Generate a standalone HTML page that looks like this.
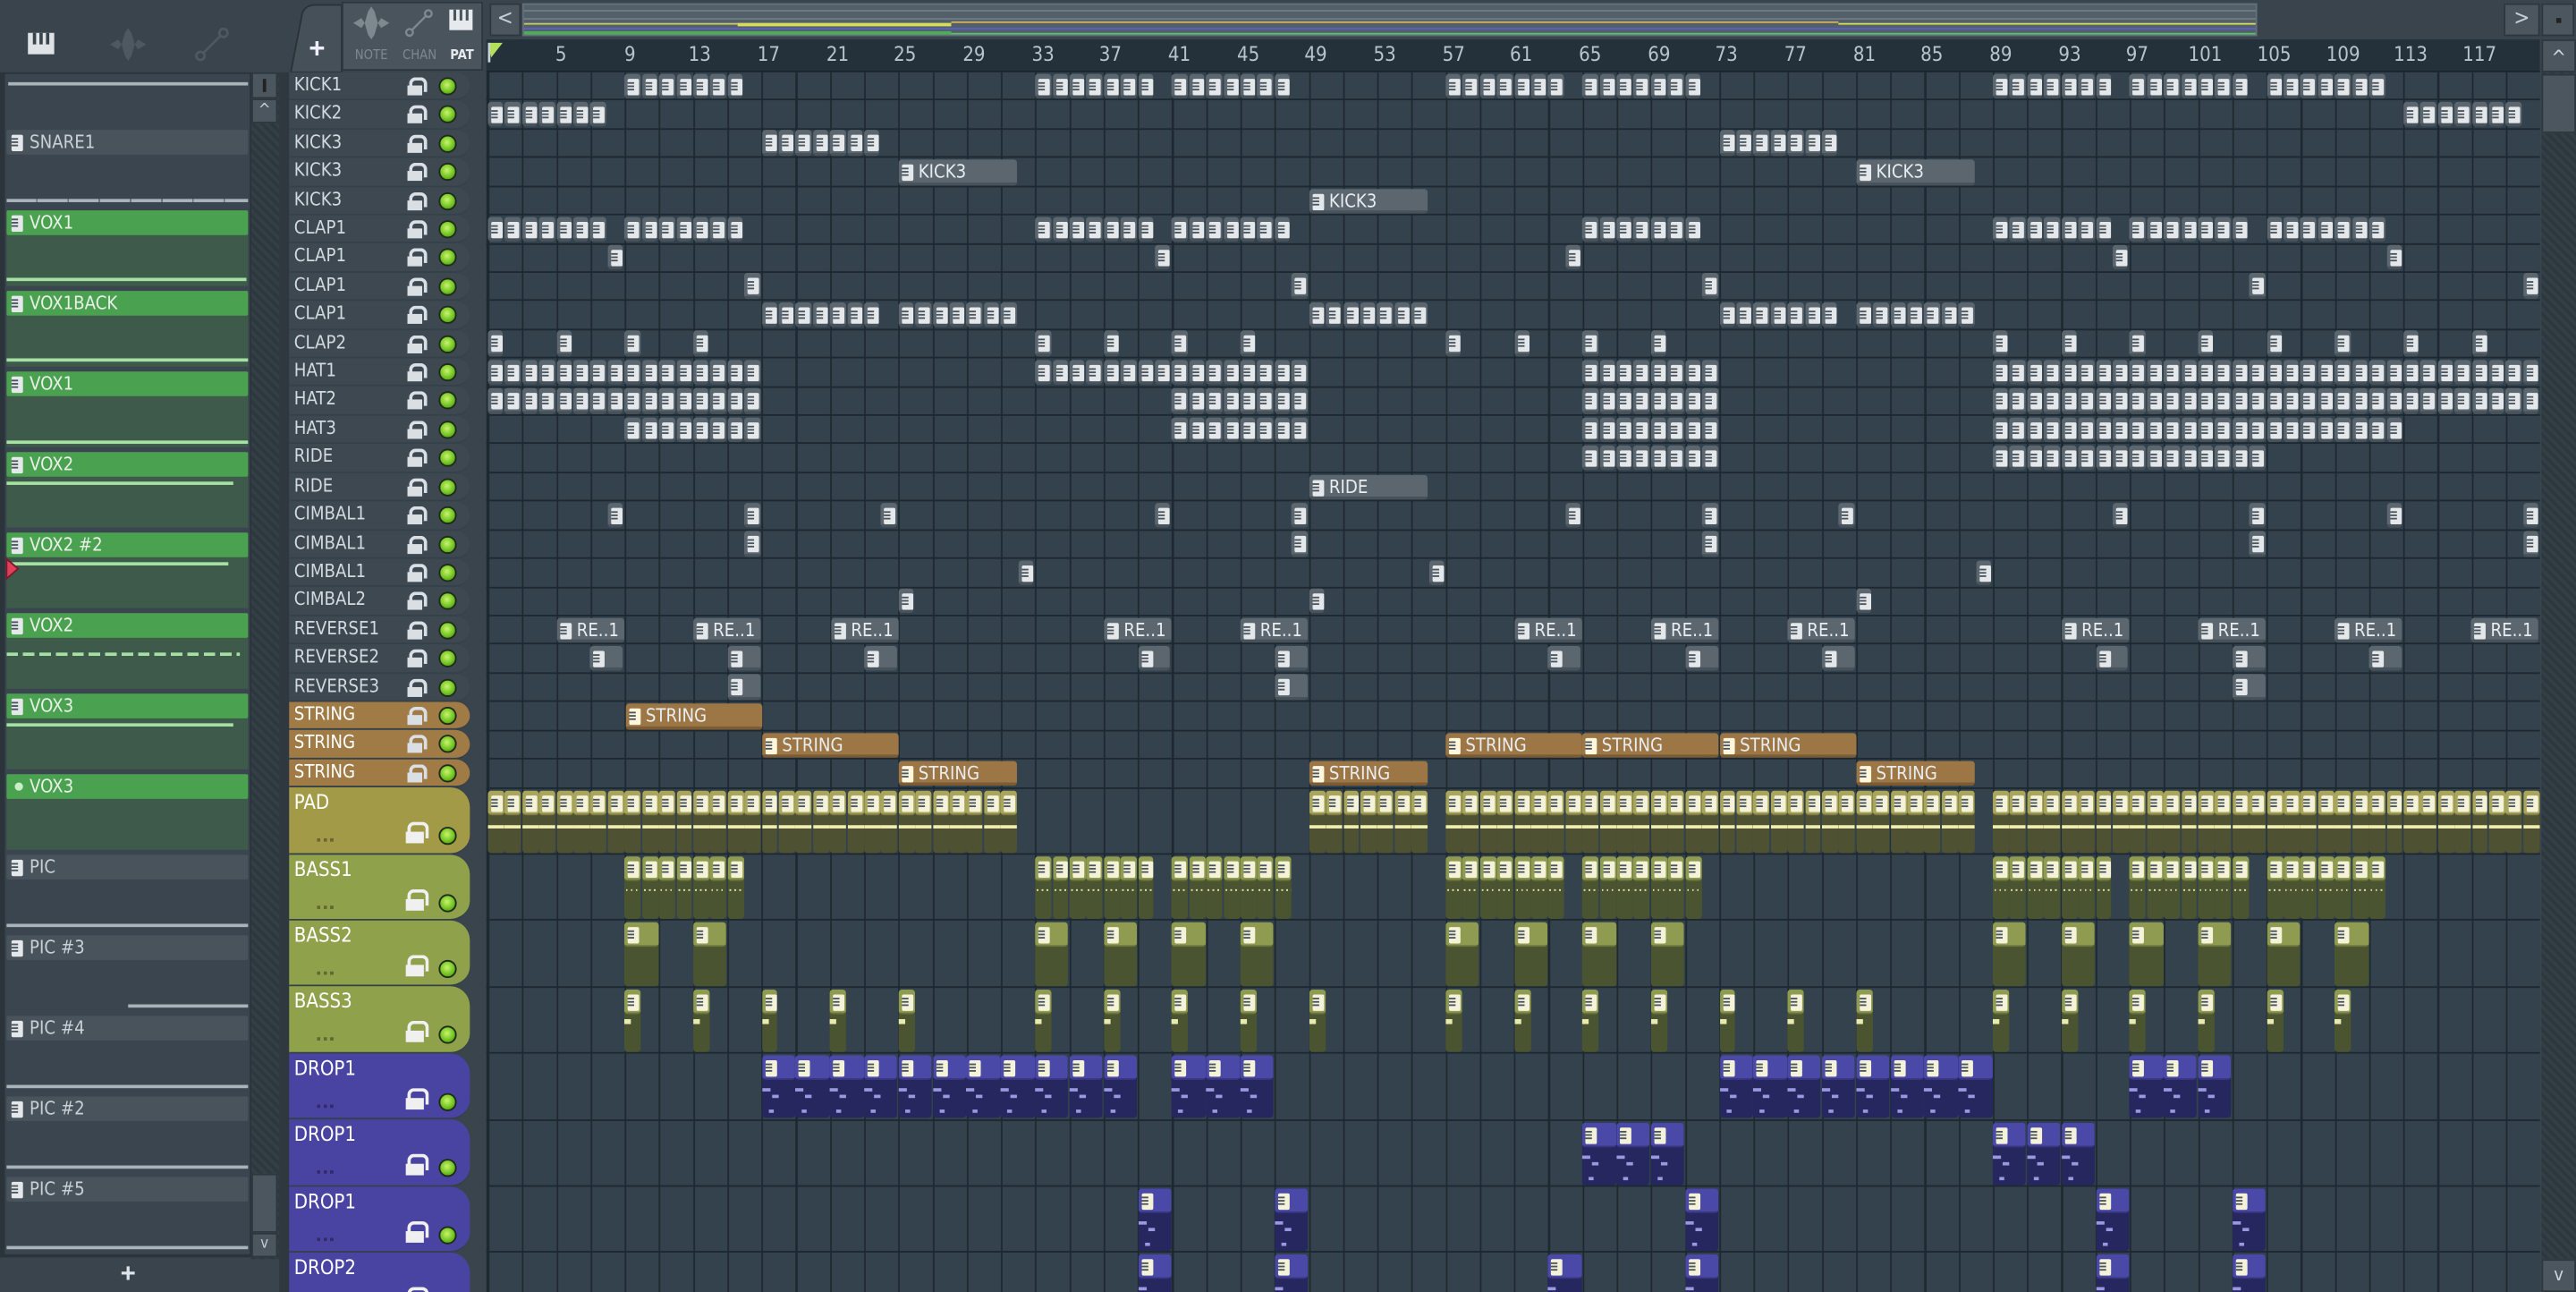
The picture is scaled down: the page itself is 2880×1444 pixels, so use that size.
<!DOCTYPE html>
<html><head><meta charset="utf-8"><style>
*{margin:0;padding:0;box-sizing:border-box}
html,body{width:2880px;height:1444px;overflow:hidden;background:#2c363e}
#w{position:absolute;left:0;top:0;width:1568px;height:786px;transform:scale(1.83673,1.83715);transform-origin:0 0;background:#3a444c;font-family:"DejaVu Sans Condensed","Liberation Sans Narrow","Liberation Sans",sans-serif;overflow:hidden}
.a{position:absolute}
.ic{position:absolute;width:7px;height:10px;background:#e4e8eb;border-radius:1px}
.ic:before{content:"";position:absolute;left:0;top:2px;width:4px;height:1px;background:#4a545d;box-shadow:0 2px 0 #4a545d,0 4px 0 #4a545d}
.lp{position:absolute;left:4px;width:147px}
.lh{position:absolute;left:0;top:0;width:147px;height:15px;border-radius:1px;color:#e8f0e8;font-size:11px;line-height:15px;padding-left:14px}
.lh .ic{left:3px;top:3px}
.g .lh{background:#4aa14f}
.g{background:#3e5a4a}
.k .lh{background:#49535c;color:#c9d1d7}
.k{background:#3a454f}
.ln{position:absolute;left:0;height:2px;background:#a6e0a4}
.k .ln{background:#a8b3ba}
#hd{position:absolute;left:176px;top:44px;width:110px}
.r{position:relative;height:17.42px;background:#3d4851;border-radius:0 9px 9px 0;border-bottom:1px solid #34404a;color:#d3dade;font-size:11px;line-height:16px;padding-left:3px}
.r.t{height:40.4px;border-radius:0 12px 12px 0;color:#fff;font-size:12px;line-height:18px}
.lk{position:absolute;left:72px;top:3px;width:9px;height:11px}
.lk:before{content:"";position:absolute;left:1px;top:0;width:7px;height:7px;border:2px solid #d9dfe3;border-bottom:none;border-radius:4px 4px 0 0}
.lk:after{content:"";position:absolute;left:0;top:5px;width:9px;height:6px;background:#d9dfe3}
.dt{position:absolute;left:91px;top:3px;width:11px;height:11px;border-radius:50%;background:radial-gradient(circle at 45% 40%,#c8f56a,#6cc020 60%,#3d7a12);border:1.5px solid #1f2a18}
.t .lk{top:21px;left:71px;width:11px;height:13px}
.t .lk:after{top:6px;height:7px;width:11px;background:#f0f0f0}
.t .lk:before{width:9px;height:8px;border-color:#f0f0f0}
.t .dt{top:24px}
.t .dots{position:absolute;left:17px;top:31px;width:10px;height:2px;background:repeating-linear-gradient(90deg,rgba(0,0,0,.35) 0 2px,transparent 2px 4px)}
#gr{position:absolute;left:296px;top:44px;width:1250px;height:742px;background:#33424d repeating-linear-gradient(90deg,#1d2830 0 1px,transparent 1px 20.82px);background-position:1px 0}
.gl{position:absolute;left:0;width:1250px;height:1px;background:#1d2830}
.c{position:absolute;border-radius:2px;overflow:hidden}
.c .ic{left:2px;top:3px}
.cl{position:absolute;left:12px;top:0;font-size:11px;line-height:16px;color:#e9edf0;white-space:nowrap}
#rl{position:absolute;left:296px;top:24px;width:1250px;height:20px;background:#25313a;border-bottom:1px solid #1b242b}
#rl span{position:absolute;top:2px;font-size:12px;color:#b9c3cb}
</style></head><body><div id="w">

<div class="a" style="left:0;top:0;width:176px;height:44px;background:#3a444c"></div>
<svg class="a" style="left:16px;top:18px" width="20" height="18" viewBox="0 0 20 18"><rect x="1" y="2" width="16" height="13" fill="#dfe3e6"/><rect x="4" y="2" width="2" height="7" fill="#3a444c"/><rect x="8" y="2" width="2" height="7" fill="#3a444c"/><rect x="12" y="2" width="2" height="7" fill="#3a444c"/></svg>
<svg class="a" style="left:66px;top:16px" width="24" height="22" viewBox="0 0 24 22"><path d="M1 11 L6 8 L8 11 L10 4 L12 1 L14 4 L16 11 L18 8 L23 11 L18 14 L16 11 L14 18 L12 21 L10 18 L8 11 L6 14Z" fill="#4e5860"/></svg>
<svg class="a" style="left:118px;top:16px" width="22" height="22" viewBox="0 0 22 22"><circle cx="4" cy="18" r="2.5" fill="none" stroke="#4e5860" stroke-width="1.5"/><circle cx="18" cy="4" r="2.5" fill="none" stroke="#4e5860" stroke-width="1.5"/><path d="M6 16 L16 6" stroke="#4e5860" stroke-width="1.5"/></svg>
<div class="a" style="left:0;top:44px;width:153px;height:742px;background:#2b343b"></div>
<svg class="a" style="left:176px;top:2px" width="34" height="42" viewBox="0 0 34 42"><path d="M1 42 L8 6 Q10 1 16 1 L32 1 L32 42Z" fill="#465059" stroke="#2a3238"/></svg>
<div class="a" style="left:188px;top:20px;color:#eef;font-size:17px;font-weight:bold;font-family:'Liberation Sans',sans-serif">+</div>
<div class="a" style="left:208px;top:1px;width:86px;height:42px;background:#4a545d;border:1px solid #2e373e"></div>
<svg class="a" style="left:213px;top:3px" width="26" height="22" viewBox="0 0 24 22"><path d="M1 11 L6 8 L8 11 L10 4 L12 1 L14 4 L16 11 L18 8 L23 11 L18 14 L16 11 L14 18 L12 21 L10 18 L8 11 L6 14Z" fill="#7e888f"/></svg>
<svg class="a" style="left:245px;top:5px" width="20" height="18" viewBox="0 0 22 22"><circle cx="4" cy="18" r="2.5" fill="none" stroke="#7e888f" stroke-width="1.6"/><circle cx="18" cy="4" r="2.5" fill="none" stroke="#7e888f" stroke-width="1.6"/><path d="M6 16 L16 6" stroke="#7e888f" stroke-width="1.6"/></svg>
<svg class="a" style="left:272px;top:5px" width="18" height="15" viewBox="0 0 20 18"><rect x="1" y="1" width="17" height="15" fill="#e6eaed"/><rect x="4" y="1" width="2" height="8" fill="#4a545d"/><rect x="8.5" y="1" width="2" height="8" fill="#4a545d"/><rect x="13" y="1" width="2" height="8" fill="#4a545d"/></svg>
<div class="a" style="left:216px;top:29px;font-size:8px;color:#7e888f">NOTE</div>
<div class="a" style="left:245px;top:29px;font-size:8px;color:#7e888f">CHAN</div>
<div class="a" style="left:274px;top:29px;font-size:8px;color:#e6eaed;font-weight:bold">PAT</div>
<div class="a" style="left:296px;top:0;width:1272px;height:24px;background:#3a444c"></div>
<div class="a" style="left:298px;top:2px;width:19px;height:20px;background:#4c565f;border:1px solid #2e373e;color:#c8d0d5;font-size:13px;text-align:center;line-height:18px">&lt;</div>
<div class="a" style="left:318px;top:2px;width:1056px;height:20px;background:#53606a;border:1px solid #62707a">
 <div class="a" style="left:0;top:3px;width:1054px;height:1px;background:#6e7c86"></div>
 <div class="a" style="left:0;top:8px;width:1054px;height:1px;background:#6e7c86"></div>
 <div class="a" style="left:0;top:14px;width:1054px;height:1px;background:#6e7c86"></div>
 <div class="a" style="left:0;top:11px;width:260px;height:1px;background:#c9c96a"></div>
 <div class="a" style="left:130px;top:11px;width:130px;height:2px;background:#d8dc5a"></div>
 <div class="a" style="left:260px;top:10px;width:540px;height:1px;background:#d2b060"></div>
 <div class="a" style="left:0;top:14px;width:1054px;height:1px;background:#5c5cc8"></div>
 <div class="a" style="left:0;top:17px;width:1054px;height:1px;background:#5cc06a"></div>
 <div class="a" style="left:0;top:16px;width:260px;height:2px;background:#4fae55"></div>
 <div class="a" style="left:800px;top:11px;width:254px;height:1px;background:#d8dc5a"></div>
</div>
<div class="a" style="left:1374px;top:0;width:150px;height:24px;background:#3a444c"></div>
<div class="a" style="left:1524px;top:2px;width:22px;height:20px;background:#4c565f;border:1px solid #2e373e;color:#c8d0d5;font-size:13px;text-align:center;line-height:18px">&gt;</div>
<div class="a" style="left:1547px;top:2px;width:20px;height:20px;background:#4c565f;border:1px solid #2e373e"><div class="a" style="left:8px;top:8px;width:3px;height:3px;background:#222"></div></div>
<div class="a" style="left:1547px;top:24px;width:21px;height:20px;background:#4c565f;border:1px solid #2e373e;color:#d0d6da;font-size:12px;text-align:center;line-height:20px">^</div>
<div class="a" style="left:1547px;top:44px;width:21px;height:742px;background:repeating-linear-gradient(45deg,#2d373e 0 2px,#343e46 2px 4px)"></div>
<div class="a" style="left:1547px;top:45px;width:21px;height:36px;background:#4c565f;border:1px solid #2e373e"></div>
<div class="a" style="left:1547px;top:766px;width:21px;height:20px;background:#4c565f;border:1px solid #2e373e;color:#d0d6da;font-size:11px;text-align:center;line-height:18px">v</div>

<div id="rl">
<svg class="a" style="left:1px;top:2px" width="9" height="12"><path d="M0 0 L9 0 L2 9Z" fill="#b5e05a"/><rect x="0" y="0" width="1.5" height="12" fill="#c9d2d8"/></svg>
<span style="left:42px">5</span><span style="left:84px">9</span><span style="left:123px">13</span><span style="left:165px">17</span><span style="left:207px">21</span><span style="left:248px">25</span><span style="left:290px">29</span><span style="left:332px">33</span><span style="left:373px">37</span><span style="left:415px">41</span><span style="left:457px">45</span><span style="left:498px">49</span><span style="left:540px">53</span><span style="left:582px">57</span><span style="left:623px">61</span><span style="left:665px">65</span><span style="left:707px">69</span><span style="left:748px">73</span><span style="left:790px">77</span><span style="left:832px">81</span><span style="left:873px">85</span><span style="left:915px">89</span><span style="left:957px">93</span><span style="left:998px">97</span><span style="left:1036px">101</span><span style="left:1078px">105</span><span style="left:1120px">109</span><span style="left:1161px">113</span><span style="left:1203px">117</span>
</div>

<div class="a" style="left:3px;top:45px;width:149px;height:718px;background:#3a454f;overflow:hidden">
 <div class="ln" style="left:2px;top:5px;width:146px;background:#a8b3ba"></div>
</div>
<div class="lp k" style="top:79px;height:46px"><div class="lh"><span class="ic"></span>SNARE1</div><div class="ln" style="top:42px;width:147px;background:repeating-linear-gradient(90deg,#a8b3ba 0 18px,#6b767e 18px 19px)"></div></div>
<div class="lp g" style="top:128px;height:46px"><div class="lh"><span class="ic"></span>VOX1</div><div class="ln" style="top:41px;width:146px"></div></div>
<div class="lp g" style="top:177px;height:46px"><div class="lh"><span class="ic"></span>VOX1BACK</div><div class="ln" style="top:41px;width:147px"></div></div>
<div class="lp g" style="top:226px;height:46px"><div class="lh"><span class="ic"></span>VOX1</div><div class="ln" style="top:42px;width:147px"></div></div>
<div class="lp g" style="top:275px;height:46px"><div class="lh"><span class="ic"></span>VOX2</div><div class="ln" style="top:18px;width:138px"></div></div>
<div class="lp g" style="top:324px;height:46px"><div class="lh"><span class="ic"></span>VOX2 #2</div><div class="ln" style="top:18px;width:132px;left:3px"></div></div>
<svg class="a" style="left:3px;top:339px" width="9" height="14"><path d="M1 1 L8 7 L1 13Z" fill="#e0405a" stroke="#7a1a2a"/></svg>
<div class="lp g" style="top:373px;height:46px"><div class="lh"><span class="ic"></span>VOX2</div><div class="ln" style="top:24px;width:142px;background:repeating-linear-gradient(90deg,#a6e0a4 0 7px,transparent 7px 10px)"></div></div>
<div class="lp g" style="top:422px;height:46px"><div class="lh"><span class="ic"></span>VOX3</div><div class="ln" style="top:18px;width:138px"></div></div>
<div class="lp g" style="top:471px;height:46px"><div class="lh"><span class="a" style="left:5px;top:5px;width:5px;height:5px;border-radius:50%;background:#c8efc8"></span>VOX3</div></div>
<div class="lp k" style="top:520px;height:46px"><div class="lh"><span class="ic"></span>PIC</div><div class="ln" style="top:42px;width:147px"></div></div>
<div class="lp k" style="top:569px;height:46px"><div class="lh"><span class="ic"></span>PIC #3</div><div class="ln" style="top:42px;left:74px;width:73px"></div></div>
<div class="lp k" style="top:618px;height:46px"><div class="lh"><span class="ic"></span>PIC #4</div><div class="ln" style="top:42px;width:147px"></div></div>
<div class="lp k" style="top:667px;height:46px"><div class="lh"><span class="ic"></span>PIC #2</div><div class="ln" style="top:42px;width:147px"></div></div>
<div class="lp k" style="top:716px;height:46px"><div class="lh"><span class="ic"></span>PIC #5</div><div class="ln" style="top:42px;width:147px"></div></div>
<div class="a" style="left:0;top:765px;height:21px;background:#3a444c;color:#dfe4e8;font-size:16px;text-align:center;line-height:22px;font-family:'Liberation Sans',sans-serif;font-weight:bold;width:156px">+</div>
<div class="a" style="left:153px;top:44px;width:17px;height:722px;background:repeating-linear-gradient(45deg,#2d373e 0 2px,#343e46 2px 4px)"></div>
<div class="a" style="left:153px;top:44px;width:16px;height:16px;background:#4c565f;border:1px solid #2e373e"><div class="a" style="left:6px;top:3px;width:2px;height:8px;background:#222"></div></div>
<div class="a" style="left:153px;top:60px;width:16px;height:15px;background:#4c565f;border:1px solid #2e373e;color:#ccc;font-size:10px;text-align:center;line-height:14px">^</div>
<div class="a" style="left:153px;top:714px;width:16px;height:36px;background:#4c565f;border:1px solid #2e373e"></div>
<div class="a" style="left:153px;top:750px;width:16px;height:15px;background:#4c565f;border:1px solid #2e373e;color:#ccc;font-size:9px;text-align:center;line-height:13px">v</div>
<div class="a" style="left:170px;top:44px;width:6px;height:742px;background:#2f383f"></div>

<div id="hd">
<div class="r">KICK1<i class="lk"></i><i class="dt"></i></div>
<div class="r">KICK2<i class="lk"></i><i class="dt"></i></div>
<div class="r">KICK3<i class="lk"></i><i class="dt"></i></div>
<div class="r">KICK3<i class="lk"></i><i class="dt"></i></div>
<div class="r">KICK3<i class="lk"></i><i class="dt"></i></div>
<div class="r">CLAP1<i class="lk"></i><i class="dt"></i></div>
<div class="r">CLAP1<i class="lk"></i><i class="dt"></i></div>
<div class="r">CLAP1<i class="lk"></i><i class="dt"></i></div>
<div class="r">CLAP1<i class="lk"></i><i class="dt"></i></div>
<div class="r">CLAP2<i class="lk"></i><i class="dt"></i></div>
<div class="r">HAT1<i class="lk"></i><i class="dt"></i></div>
<div class="r">HAT2<i class="lk"></i><i class="dt"></i></div>
<div class="r">HAT3<i class="lk"></i><i class="dt"></i></div>
<div class="r">RIDE<i class="lk"></i><i class="dt"></i></div>
<div class="r">RIDE<i class="lk"></i><i class="dt"></i></div>
<div class="r">CIMBAL1<i class="lk"></i><i class="dt"></i></div>
<div class="r">CIMBAL1<i class="lk"></i><i class="dt"></i></div>
<div class="r">CIMBAL1<i class="lk"></i><i class="dt"></i></div>
<div class="r">CIMBAL2<i class="lk"></i><i class="dt"></i></div>
<div class="r">REVERSE1<i class="lk"></i><i class="dt"></i></div>
<div class="r">REVERSE2<i class="lk"></i><i class="dt"></i></div>
<div class="r">REVERSE3<i class="lk"></i><i class="dt"></i></div>
<div class="r" style="background:#a07b46;color:#fff">STRING<i class="lk"></i><i class="dt"></i></div>
<div class="r" style="background:#a07b46;color:#fff">STRING<i class="lk"></i><i class="dt"></i></div>
<div class="r" style="background:#a07b46;color:#fff">STRING<i class="lk"></i><i class="dt"></i></div>
<div class="r t" style="background:#a39a48">PAD<i class="lk"></i><i class="dt"></i><i class="dots"></i></div>
<div class="r t" style="background:#8fa14a">BASS1<i class="lk"></i><i class="dt"></i><i class="dots"></i></div>
<div class="r t" style="background:#8fa14a">BASS2<i class="lk"></i><i class="dt"></i><i class="dots"></i></div>
<div class="r t" style="background:#8fa14a">BASS3<i class="lk"></i><i class="dt"></i><i class="dots"></i></div>
<div class="r t" style="background:#4944a2">DROP1<i class="lk"></i><i class="dt"></i><i class="dots"></i></div>
<div class="r t" style="background:#4944a2">DROP1<i class="lk"></i><i class="dt"></i><i class="dots"></i></div>
<div class="r t" style="background:#4944a2">DROP1<i class="lk"></i><i class="dt"></i><i class="dots"></i></div>
<div class="r t" style="background:#4944a2">DROP2<i class="lk"></i><i class="dt"></i><i class="dots"></i></div>
</div>

<div id="gr">
<div class="c" style="left:251px;top:53.3px;width:72px;height:15.4px;background:#5b666f;border-bottom:2px solid #48525a"><span class="ic"></span><span class="cl">KICK3</span></div>
<div class="c" style="left:834px;top:53.3px;width:72px;height:15.4px;background:#5b666f;border-bottom:2px solid #48525a"><span class="ic"></span><span class="cl">KICK3</span></div>
<div class="c" style="left:501px;top:70.7px;width:72px;height:15.4px;background:#5b666f;border-bottom:2px solid #48525a"><span class="ic"></span><span class="cl">KICK3</span></div>
<div class="c" style="left:501px;top:244.9px;width:72px;height:15.4px;background:#5b666f;border-bottom:2px solid #48525a"><span class="ic"></span><span class="cl">RIDE</span></div>
<div class="c" style="left:43px;top:331.9px;width:41px;height:15.4px;background:#5b666f;border-bottom:2px solid #48525a"><span class="ic"></span><span class="cl">RE..1</span></div>
<div class="c" style="left:126px;top:331.9px;width:41px;height:15.4px;background:#5b666f;border-bottom:2px solid #48525a"><span class="ic"></span><span class="cl">RE..1</span></div>
<div class="c" style="left:210px;top:331.9px;width:41px;height:15.4px;background:#5b666f;border-bottom:2px solid #48525a"><span class="ic"></span><span class="cl">RE..1</span></div>
<div class="c" style="left:376px;top:331.9px;width:41px;height:15.4px;background:#5b666f;border-bottom:2px solid #48525a"><span class="ic"></span><span class="cl">RE..1</span></div>
<div class="c" style="left:459px;top:331.9px;width:41px;height:15.4px;background:#5b666f;border-bottom:2px solid #48525a"><span class="ic"></span><span class="cl">RE..1</span></div>
<div class="c" style="left:626px;top:331.9px;width:41px;height:15.4px;background:#5b666f;border-bottom:2px solid #48525a"><span class="ic"></span><span class="cl">RE..1</span></div>
<div class="c" style="left:709px;top:331.9px;width:41px;height:15.4px;background:#5b666f;border-bottom:2px solid #48525a"><span class="ic"></span><span class="cl">RE..1</span></div>
<div class="c" style="left:792px;top:331.9px;width:41px;height:15.4px;background:#5b666f;border-bottom:2px solid #48525a"><span class="ic"></span><span class="cl">RE..1</span></div>
<div class="c" style="left:959px;top:331.9px;width:41px;height:15.4px;background:#5b666f;border-bottom:2px solid #48525a"><span class="ic"></span><span class="cl">RE..1</span></div>
<div class="c" style="left:1042px;top:331.9px;width:41px;height:15.4px;background:#5b666f;border-bottom:2px solid #48525a"><span class="ic"></span><span class="cl">RE..1</span></div>
<div class="c" style="left:1125px;top:331.9px;width:41px;height:15.4px;background:#5b666f;border-bottom:2px solid #48525a"><span class="ic"></span><span class="cl">RE..1</span></div>
<div class="c" style="left:1208px;top:331.9px;width:41px;height:15.4px;background:#5b666f;border-bottom:2px solid #48525a"><span class="ic"></span><span class="cl">RE..1</span></div>
<div class="c" style="left:85px;top:384.2px;width:83px;height:15.4px;background:#9c7745;border-bottom:2px solid #7b5c34"><span class="ic" style="background:#fff6dc"></span><span class="cl">STRING</span></div>
<div class="c" style="left:168px;top:401.6px;width:83px;height:15.4px;background:#9c7745;border-bottom:2px solid #7b5c34"><span class="ic" style="background:#fff6dc"></span><span class="cl">STRING</span></div>
<div class="c" style="left:584px;top:401.6px;width:83px;height:15.4px;background:#9c7745;border-bottom:2px solid #7b5c34"><span class="ic" style="background:#fff6dc"></span><span class="cl">STRING</span></div>
<div class="c" style="left:667px;top:401.6px;width:83px;height:15.4px;background:#9c7745;border-bottom:2px solid #7b5c34"><span class="ic" style="background:#fff6dc"></span><span class="cl">STRING</span></div>
<div class="c" style="left:751px;top:401.6px;width:83px;height:15.4px;background:#9c7745;border-bottom:2px solid #7b5c34"><span class="ic" style="background:#fff6dc"></span><span class="cl">STRING</span></div>
<div class="c" style="left:251px;top:419px;width:72px;height:15.4px;background:#9c7745;border-bottom:2px solid #7b5c34"><span class="ic" style="background:#fff6dc"></span><span class="cl">STRING</span></div>
<div class="c" style="left:501px;top:419px;width:72px;height:15.4px;background:#9c7745;border-bottom:2px solid #7b5c34"><span class="ic" style="background:#fff6dc"></span><span class="cl">STRING</span></div>
<div class="c" style="left:834px;top:419px;width:72px;height:15.4px;background:#9c7745;border-bottom:2px solid #7b5c34"><span class="ic" style="background:#fff6dc"></span><span class="cl">STRING</span></div>
</div>

<script>
(function(){
var g=document.getElementById('gr'),B=10.41;
function top(i){return i<25?i*17.42:25*17.42+(i-25)*40.4}
var H='';
for(var i=1;i<=33;i++)H+='<div class="gl" style="top:'+(top(i)-1)+'px"></div>';
var S={
0:[[9,7],[33,7],[41,7],[57,7],[65,7],[89,7],[97,7],[105,7]],
1:[[1,7],[113,7]],
2:[[17,7],[73,7]],
5:[[1,7],[9,7],[33,7],[41,7],[65,7],[89,7],[97,7],[105,7]],
6:[[8,1],[40,1],[64,1],[96,1],[112,1]],
7:[[16,1],[48,1],[72,1],[104,1],[120,1]],
8:[[17,7],[25,7],[49,7],[73,7],[81,7]],
9:[[1,1],[5,1],[9,1],[13,1],[33,1],[37,1],[41,1],[45,1],[57,1],[61,1],[65,1],[69,1],[89,1],[93,1],[97,1],[101,1],[105,1],[109,1],[113,1],[117,1]],
10:[[1,16],[33,16],[65,8],[89,32]],
11:[[1,16],[41,8],[65,8],[89,32]],
12:[[9,8],[41,8],[65,8],[89,24]],
13:[[65,8],[89,16]],
15:[[8,1],[16,1],[24,1],[40,1],[48,1],[64,1],[72,1],[80,1],[96,1],[104,1],[112,1],[120,1]],
16:[[16,1],[48,1],[72,1],[104,1],[120,1]],
17:[[32,1],[56,1],[88,1]],
18:[[25,1],[49,1],[81,1]],
20:[[7,1,2],[15,1,2],[23,1,2],[39,1,2],[47,1,2],[63,1,2],[71,1,2],[79,1,2],[95,1,2],[103,1,2],[111,1,2]],
21:[[15,1,2],[47,1,2],[103,1,2]]
};
for(var r in S){S[r].forEach(function(a){var w=(a[2]||1)*B;for(var k=0;k<a[1];k++){var x=(a[0]-1)*B+k*w+1;
H+='<div class="c" style="left:'+x+'px;top:'+(top(+r)+0.5)+'px;width:'+(w-1)+'px;height:15.4px;background:#5b666f;border-bottom:2px solid #48525a"><span class="ic"></span></div>';}});}
var T={
25:{c:['#a9a65c','#4f5232','#f0eeb0'],d:[[1,31,1],[49,7,1],[57,31,1],[89,32,1]]},
26:{c:['#8f9b50','#4b5430','#e8eab0'],d:[[9,7,1],[33,7,1],[41,7,1],[57,7,1],[65,7,1],[89,7,1],[97,7,1],[105,7,1]]},
27:{c:['#8f9b50','#4b5430','#e8eab0'],d:[[9,1,2],[13,1,2],[33,1,2],[37,1,2],[41,1,2],[45,1,2],[57,1,2],[61,1,2],[65,1,2],[69,1,2],[89,1,2],[93,1,2],[97,1,2],[101,1,2],[105,1,2],[109,1,2]]},
28:{c:['#8f9b50','#4b5430','#e8eab0'],d:[[9,1,1],[13,1,1],[17,1,1],[21,1,1],[25,1,1],[33,1,1],[37,1,1],[41,1,1],[45,1,1],[49,1,1],[57,1,1],[61,1,1],[65,1,1],[69,1,1],[73,1,1],[77,1,1],[81,1,1],[89,1,1],[93,1,1],[97,1,1],[101,1,1],[105,1,1],[109,1,1]]},
29:{c:['#4b49a8','#25275e','#b8b4f0'],d:[[17,11,2],[41,3,2],[73,8,2],[97,3,2]]},
30:{c:['#4b49a8','#25275e','#b8b4f0'],d:[[65,3,2],[89,3,2]]},
31:{c:['#4b49a8','#25275e','#b8b4f0'],d:[[39,1,2],[47,1,2],[71,1,2],[95,1,2],[103,1,2]]},
32:{c:['#4b49a8','#25275e','#b8b4f0'],d:[[39,1,2],[47,1,2],[63,1,2],[71,1,2],[95,1,2],[103,1,2]]}
};
for(var r in T){var o=T[r];o.d.forEach(function(a){var w=a[2]*B;for(var k=0;k<a[1];k++){var x=(a[0]-1)*B+k*w+1,y=top(+r)+1;
var line='';
if(r==25)line='<div class="a" style="left:0;top:21px;width:100%;height:2px;background:'+o.c[2]+'"></div>';
else if(r==26)line='<div class="a" style="left:1px;top:20px;width:100%;height:1px;background:repeating-linear-gradient(90deg,'+o.c[2]+' 0 1px,transparent 1px 3px)"></div>';
else if(r==28)line='<div class="a" style="left:0;top:18px;width:4px;height:3px;background:'+o.c[2]+'"></div>';
else if(r>=29)line='<div class="a" style="left:0;top:20px;width:5px;height:2px;background:#9a98e0"></div><div class="a" style="left:6px;top:24px;width:4px;height:2px;background:#9a98e0"></div><div class="a" style="left:4px;top:33px;width:3px;height:2px;background:#9a98e0"></div>';
H+='<div class="c" style="left:'+x+'px;top:'+y+'px;width:'+(w-0.5)+'px;height:38.4px;background:'+o.c[1]+'"><div class="a" style="left:0;top:0;width:100%;height:15px;background:'+o.c[0]+';border-radius:2px;border-bottom:1px solid rgba(0,0,0,.25)"><span class="ic" style="background:#f4f2d8"></span></div>'+line+'</div>';}});}
g.insertAdjacentHTML('afterbegin',H);
})();
</script>
</div></body></html>
